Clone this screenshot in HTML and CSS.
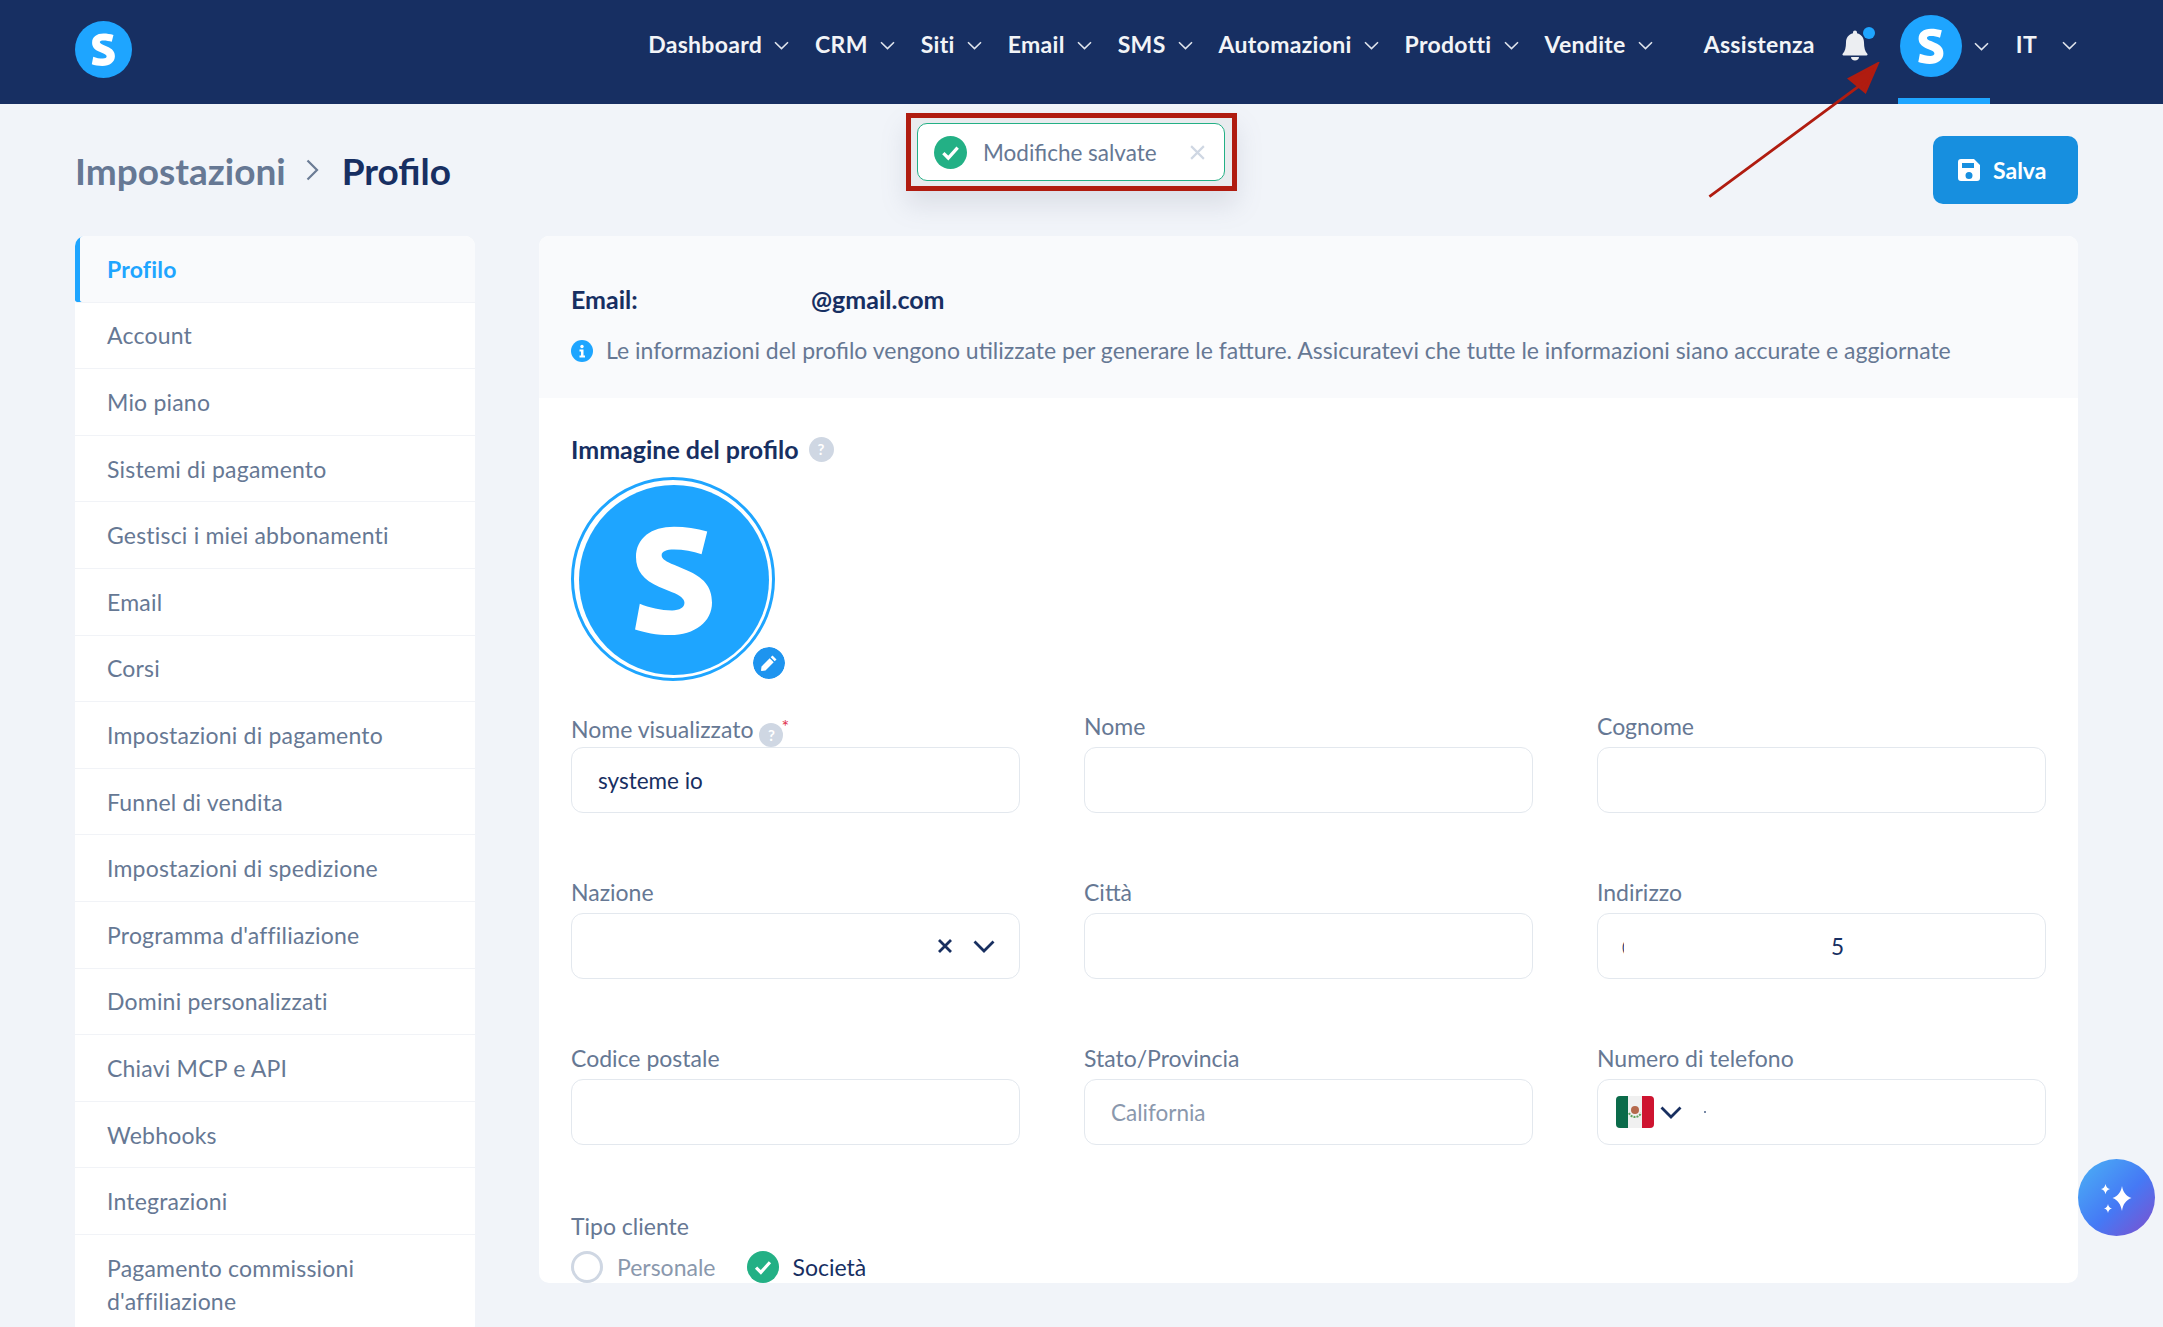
FILE: index.html
```html
<!DOCTYPE html>
<html lang="it">
<head>
<meta charset="utf-8">
<title>Profilo</title>
<link rel="stylesheet" href="styles.css">
</head>
<body>
<svg class="defs" width="0" height="0" aria-hidden="true">
  <defs>
    <symbol id="s-logo" viewBox="0 0 100 100">
      <circle cx="50" cy="50" r="50" fill="#1ea5ff"/>
      <path fill="#fff" d="M67.5 24.5L64.5 36.5C60 35 55 34 50 34C46 34 43.5 35 43.5 37C43.5 39 46 40.5 50 42L57 45C65 48.5 70 53 70 62C70 72 61 79 48 79C41 79 34 77.5 29.5 76L32 62.5C37 64.5 43 66 49 66C53 66 55.5 64.5 55.5 62C55.5 60 53 58 49 56.5L42 53.5C34 50 30 45 30 38C30 28 38 22 50 22C56 22 62 23 67.5 24.5Z"/>
    </symbol>
    <symbol id="chev" viewBox="0 0 15 9">
      <path d="M1 1.2L7.5 7.6L14 1.2" fill="none" stroke="currentColor" stroke-width="1.6"/>
    </symbol>
    <symbol id="check" viewBox="0 0 30 30">
      <circle cx="15" cy="15" r="15" fill="#23b085"/>
      <path d="M8.5 15.5L13 20L21.5 10.5" fill="none" stroke="#fff" stroke-width="3"/>
    </symbol>
  </defs>
</svg>

<header class="topbar">
  <a class="logo"><svg class="logo-svg"><use href="#s-logo"/></svg></a>
  <nav class="menu">
    <a class="menu-item">Dashboard<svg class="chev"><use href="#chev"/></svg></a>
    <a class="menu-item">CRM<svg class="chev"><use href="#chev"/></svg></a>
    <a class="menu-item">Siti<svg class="chev"><use href="#chev"/></svg></a>
    <a class="menu-item">Email<svg class="chev"><use href="#chev"/></svg></a>
    <a class="menu-item">SMS<svg class="chev"><use href="#chev"/></svg></a>
    <a class="menu-item">Automazioni<svg class="chev"><use href="#chev"/></svg></a>
    <a class="menu-item">Prodotti<svg class="chev"><use href="#chev"/></svg></a>
    <a class="menu-item menu-last">Vendite<svg class="chev"><use href="#chev"/></svg></a>
    <a class="menu-item menu-help">Assistenza</a>
    <span class="bell">
      <svg class="bell-svg" viewBox="0 0 28 32"><path fill="#eceef2" d="M14 1.5c-1.2 0-2 .9-2 2v.8C7.6 5.300 5 9 5 13.500c0 5-1 9-3.300 11.200-.6.6-.2 1.800.8 1.800h23c1 0 1.400-1.200.8-1.800C24 22.500 23 18.500 23 13.500c0-4.500-2.600-8.200-7-9.200v-.8c0-1.100-.8-2-2-2zM10 28h8c0 2-1.700 3.500-4 3.500S10 30 10 28z"/></svg>
      <i class="bell-dot"></i>
    </span>
    <a class="user">
      <svg class="user-svg"><use href="#s-logo"/></svg>
      <svg class="chev user-chev"><use href="#chev"/></svg>
    </a>
    <a class="menu-item menu-lang">IT<svg class="chev"><use href="#chev"/></svg></a>
  </nav>
</header>

<div class="toast-frame">
  <div class="toast">
    <svg class="toast-check"><use href="#check"/></svg>
    <span class="toast-text">Modifiche salvate</span>
    <svg class="toast-x" viewBox="0 0 16 16"><path d="M2 2L14 14M14 2L2 14" stroke="#cfd7e3" stroke-width="2" fill="none"/></svg>
  </div>
</div>

<svg class="arrow" viewBox="0 0 200 150"><path d="M1.500 145.500L172 19.500M153 18L183 2L170 32Z" fill="#b01c10" stroke="#b01c10" stroke-width="3"/></svg>

<main class="page">
  <div class="page-head">
    <h1 class="crumbs"><span class="crumb-muted">Impostazioni</span><svg class="crumb-sep" viewBox="0 0 13 22"><path d="M1.500 1.500L11 11L1.500 20.500" fill="none" stroke="#6b7c95" stroke-width="2.200"/></svg><span class="crumb-now">Profilo</span></h1>
    <button class="save" type="button">
      <svg class="save-icon" viewBox="0 0 22 22"><path fill="#fff" d="M3 0h13l6 6v13a3 3 0 0 1-3 3H3a3 3 0 0 1-3-3V3a3 3 0 0 1 3-3zm1 4v5h12V4zm7 9a3.500 3.500 0 1 0 0 7 3.500 3.500 0 0 0 0-7z"/></svg>
      Salva
    </button>
  </div>

  <div class="columns">
    <aside class="side">
      <a class="side-item is-active">Profilo</a>
      <a class="side-item">Account</a>
      <a class="side-item">Mio piano</a>
      <a class="side-item">Sistemi di pagamento</a>
      <a class="side-item">Gestisci i miei abbonamenti</a>
      <a class="side-item">Email</a>
      <a class="side-item">Corsi</a>
      <a class="side-item">Impostazioni di pagamento</a>
      <a class="side-item">Funnel di vendita</a>
      <a class="side-item">Impostazioni di spedizione</a>
      <a class="side-item">Programma d'affiliazione</a>
      <a class="side-item">Domini personalizzati</a>
      <a class="side-item">Chiavi MCP e API</a>
      <a class="side-item">Webhooks</a>
      <a class="side-item">Integrazioni</a>
      <a class="side-item side-two">Pagamento commissioni d'affiliazione</a>
    </aside>

    <section class="panel">
      <div class="panel-top">
        <p class="email"><span class="email-label">Email:</span><span>@gmail.com</span></p>
        <p class="info">
          <svg class="info-icon" viewBox="0 0 22 22"><circle cx="11" cy="11" r="11" fill="#1ea5ff"/><circle cx="11" cy="6.500" r="1.700" fill="#fff"/><path fill="#fff" d="M8.500 9.500h4v6h1.500v2H8.500v-2H10v-4H8.500z"/></svg>
          Le informazioni del profilo vengono utilizzate per generare le fatture. Assicuratevi che tutte le informazioni siano accurate e aggiornate
        </p>
      </div>

      <div class="panel-body">
        <h2 class="img-title">Immagine del profilo <span class="help help-lg">?</span></h2>
        <div class="avatar">
          <svg class="avatar-svg"><use href="#s-logo"/></svg>
          <span class="pencil"><svg class="pencil-svg" viewBox="0 0 18 18"><path fill="#fff" d="M12.500 1.500l4 4-1.800 1.800-4-4zM9.700 4.300l4 4L5.500 16.500l-4 .5-.5-.5.500-4z"/></svg></span>
        </div>

        <div class="form-grid">
          <div class="field">
            <label class="label">Nome visualizzato <span class="help">?</span><b class="req">*</b></label>
            <div class="box box-text">systeme io</div>
          </div>
          <div class="field"><label class="label">Nome</label><div class="box"></div></div>
          <div class="field"><label class="label">Cognome</label><div class="box"></div></div>

          <div class="field">
            <label class="label">Nazione</label>
            <div class="box box-select">
              <svg class="sel-x" viewBox="0 0 16 16"><path d="M2 2L14 14M14 2L2 14" stroke="#182f60" stroke-width="2.800" fill="none"/></svg>
              <svg class="sel-chev" viewBox="0 0 22 13"><path d="M1.500 1.500L11 11L20.500 1.500" fill="none" stroke="#182f60" stroke-width="2.800"/></svg>
            </div>
          </div>
          <div class="field"><label class="label">Città</label><div class="box"></div></div>
          <div class="field">
            <label class="label">Indirizzo</label>
            <div class="box box-text box-addr"><span class="sliver">(</span><span>5</span></div>
          </div>

          <div class="field"><label class="label">Codice postale</label><div class="box"></div></div>
          <div class="field"><label class="label">Stato/Provincia</label><div class="box box-text box-ph">California</div></div>
          <div class="field">
            <label class="label">Numero di telefono</label>
            <div class="box box-phone">
              <svg class="flag" viewBox="0 0 38 32">
                <rect width="38" height="32" rx="4" fill="#f0f0f0"/>
                <path d="M4 0h8v32H4a4 4 0 0 1-4-4V4a4 4 0 0 1 4-4z" fill="#0b6b4a"/>
                <path d="M26 0h8a4 4 0 0 1 4 4v24a4 4 0 0 1-4 4h-8z" fill="#ce1430"/>
                <circle cx="19" cy="14" r="4" fill="#b5694c"/>
                <path d="M13 17a6.500 6.500 0 0 0 12 0" fill="none" stroke="#5fa35c" stroke-width="2" stroke-dasharray="2 1"/>
              </svg>
              <svg class="sel-chev" viewBox="0 0 22 13"><path d="M1.500 1.500L11 11L20.500 1.500" fill="none" stroke="#182f60" stroke-width="2.800"/></svg>
              <span class="phone-dot"></span>
            </div>
          </div>
        </div>

        <div class="client">
          <div class="client-label">Tipo cliente</div>
          <div class="radios">
            <span class="radio radio-off"><i class="radio-ring"></i>Personale</span>
            <span class="radio radio-on"><svg class="radio-check"><use href="#check"/></svg>Società</span>
          </div>
        </div>
      </div>
    </section>
  </div>
</main>

<button class="spark" type="button" aria-label="AI">
  <svg class="spark-svg" viewBox="0 0 40 40"><path fill="#fff" d="M25 8c1 6 4 10 9.500 12C29 22 26 26 25 33c-1.500-7-4-11-9.500-13C21 18 24 14 25 8zM8.500 6c.6 3 2 4.500 4.500 5-2.500.7-3.900 2.200-4.500 5.200C7.900 13.200 6.500 11.700 4 11c2.500-.5 3.900-2 4.500-5zM11 26c.5 2.700 1.700 4 4 4.500-2.300.6-3.500 1.900-4 4.500-.5-2.600-1.700-3.900-4-4.500 2.300-.5 3.500-1.800 4-4.500z"/></svg>
</button>
</body>
</html>
```

FILE: styles.css
```css
* { box-sizing: border-box; }
html, body { margin: 0; height: 1327px; overflow: hidden; }
body {
  position: relative;
  background: #f1f4f9;
  font-family: "Lato", "Liberation Sans", sans-serif;
  font-size: 23px;
  color: #667894;
}
.defs { position: absolute; }
p, h1, h2 { margin: 0; }

.topbar {
  display: flex;
  height: 104px;
  padding: 0 86px 0 75px;
  background: #172f62;
  color: #f2f4f7;
}
.logo { padding-top: 21px; }
.logo-svg { display: block; width: 57px; height: 57px; }
.menu { display: flex; margin-left: auto; }
.menu-item {
  display: flex;
  align-items: center;
  gap: 12px;
  padding-bottom: 16px;
  margin-right: 26px;
  font-weight: 700;
  font-size: 23px;
  letter-spacing: 0.3px;
  white-space: nowrap;
}
.chev { width: 15px; height: 9px; margin-top: 2px; color: #dfe4ec; }
.menu-last { margin-right: 51px; }
.menu-help { margin-right: 26px; }
.menu-lang { margin-right: 0; gap: 25px; margin-left: 26px; }
.bell { position: relative; margin-top: 29px; margin-right: 30px; width: 30px; height: 34px; }
.bell-svg { display: block; width: 28px; height: 32px; }
.bell-dot { position: absolute; top: -2px; right: -4px; width: 12px; height: 12px; border-radius: 50%; background: #1ea5ff; }
.user {
  display: flex;
  align-items: flex-start;
  gap: 12px;
  width: 92px;
  margin-left: -3px;
  padding: 15px 0 0 2px;
  border-bottom: 6px solid #1ea5ff;
}
.user-svg { width: 62px; height: 62px; }
.user-chev { margin-top: 27px; }

.toast-frame {
  position: absolute;
  left: 906px;
  top: 113px;
  width: 331px;
  height: 78px;
  padding: 5px 7px 5px 6px;
  border: 5px solid #b01c10;
  background: #e9ebee;
  box-shadow: 0 14px 24px rgba(120, 130, 150, 0.18);
}
.toast {
  display: flex;
  align-items: center;
  height: 100%;
  padding: 0 18px 0 16px;
  border: 1px solid #23b085;
  border-radius: 10px;
  background: #fff;
}
.toast-check { width: 33px; height: 33px; flex: none; }
.toast-text { margin-left: 16px; font-size: 22.500px; white-space: nowrap; }
.toast-x { width: 17px; height: 17px; margin-left: auto; }
.arrow { position: absolute; left: 1708px; top: 62px; width: 185px; height: 139px; }

.page { padding: 32px 85px 0 75px; }
.page-head { display: flex; justify-content: space-between; align-items: center; height: 68px; }
.crumbs { display: flex; align-items: center; font-size: 37px; font-weight: 700; }
.crumb-muted { color: #667894; }
.crumb-now { color: #172f62; }
.crumb-sep { width: 13px; height: 22px; margin: 0 23px 0 20px; }
.save {
  display: flex;
  align-items: center;
  gap: 13px;
  width: 145px;
  height: 68px;
  padding: 0 0 0 25px;
  border: 0;
  border-radius: 10px;
  background: #178fdf;
  color: #fff;
  font: 700 23px "Lato", "Liberation Sans", sans-serif;
}
.save-icon { width: 22px; height: 22px; }

.columns { display: flex; gap: 64px; align-items: flex-start; margin-top: 32px; }
.side { flex: none; width: 400px; border-radius: 10px; background: #fff; overflow: hidden; }
.side-item {
  display: flex;
  align-items: center;
  height: 66.600px;
  padding: 0 32px;
  border-bottom: 1px solid #f1f3f7;
  font-size: 23px;
  letter-spacing: 0.2px;
}
.is-active {
  background: #f9fafc;
  color: #1ea5ff;
  font-weight: 700;
  box-shadow: inset 5px 0 0 #1ea5ff;
  border-radius: 3px 0 0 3px;
}
.side-two { height: 100px; align-items: flex-start; padding-top: 17px; line-height: 33px; }

.panel { flex: 1; border-radius: 10px; background: #fff; min-width: 0; }
.panel-top { height: 162px; padding: 46px 32px 0; background: #f9fafc; border-radius: 10px 10px 0 0; }
.email { font-size: 25px; font-weight: 700; color: #172f62; line-height: 34px; }
.email-label { display: inline-block; width: 240px; }
.info { display: flex; align-items: center; gap: 13px; margin-top: 17px; line-height: 34px; font-size: 23px; white-space: nowrap; }
.info-icon { width: 22px; height: 22px; flex: none; margin-top: 2px; }

.panel-body { padding: 34px 32px 0; }
.img-title { display: flex; align-items: center; gap: 10px; font-size: 25px; font-weight: 700; color: #172f62; line-height: 34px; }
.help {
  display: inline-flex;
  align-items: center;
  justify-content: center;
  width: 24px;
  height: 24px;
  border-radius: 50%;
  background: #cfd7e3;
  color: #fff;
  font-size: 15px;
  font-weight: 700;
  vertical-align: -3px;
}
.help-lg { width: 25px; height: 25px; }
.avatar {
  position: relative;
  width: 204px;
  height: 204px;
  margin-top: 11px;
  padding: 7px;
  border: 3px solid #1ea5ff;
  border-radius: 50%;
}
.avatar-svg { display: block; width: 184px; height: 184px; margin: -2px; width: 190px; height: 190px; }
.pencil {
  position: absolute;
  right: -13px;
  bottom: -1px;
  display: flex;
  align-items: center;
  justify-content: center;
  width: 32px;
  height: 32px;
  border-radius: 50%;
  background: #1e94ef;
  outline: 2px solid #fff;
}
.pencil-svg { width: 18px; height: 18px; }

.form-grid { display: grid; grid-template-columns: repeat(3, 1fr); column-gap: 64px; row-gap: 64px; margin-top: 30px; }
.field { min-width: 0; }
.label { display: block; height: 36px; line-height: 30px; font-size: 23px; white-space: nowrap; }
.req { color: #e0304a; font-weight: 400; vertical-align: 5px; font-size: 18px; margin-left: -2px; }
.box {
  display: flex;
  align-items: center;
  height: 66px;
  padding: 0 26px;
  border: 1px solid #e3e8ee;
  border-radius: 12px;
  background: #fff;
}
.box-text { color: #172f62; font-size: 22.500px; }
.box-ph { color: #8a98ad; }
.box-select { justify-content: flex-end; gap: 20px; padding-right: 24px; }
.sel-x { width: 16px; height: 16px; }
.sel-chev { width: 22px; height: 13px; flex: none; }
.box-addr { justify-content: flex-start; padding-left: 24px; }
.sliver { width: 2px; overflow: hidden; font-size: 14px; margin-right: 207px; }
.box-phone { padding-left: 18px; gap: 6px; }
.flag { width: 38px; height: 32px; flex: none; }
.phone-dot { width: 2px; height: 2px; margin-left: 16px; border-radius: 50%; background: #4a6288; }

.client { margin-top: 66px; }
.client-label { line-height: 30px; }
.radios { display: flex; align-items: center; gap: 31px; margin-top: 10px; }
.radio { display: flex; align-items: center; gap: 14px; font-size: 23px; }
.radio-off { color: #8a98ad; }
.radio-on { color: #172f62; }
.radio-ring { width: 32px; height: 32px; border: 3px solid #cfd7e3; border-radius: 50%; }
.radio-check { width: 32px; height: 32px; }

.spark {
  position: absolute;
  left: 2078px;
  top: 1159px;
  width: 77px;
  height: 77px;
  padding: 0;
  border: 0;
  border-radius: 50%;
  background: linear-gradient(135deg, #4aa8f5 10%, #4579f5 55%, #7a53d0 95%);
}
.spark-svg { display: block; width: 40px; height: 40px; margin: 0 auto; }
```
